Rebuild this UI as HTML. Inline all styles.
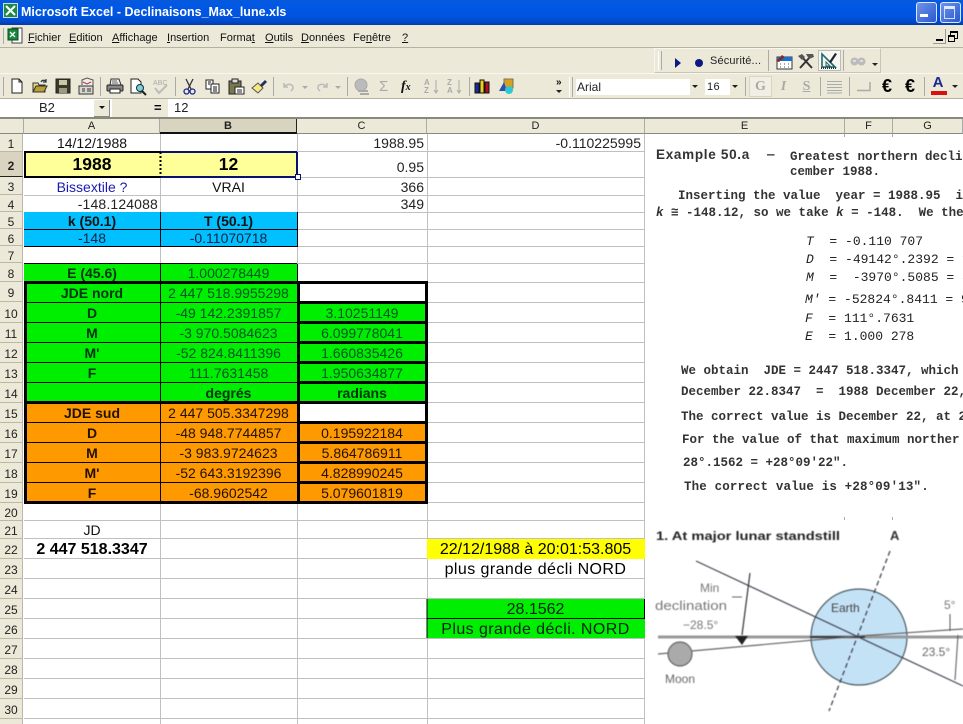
<!DOCTYPE html>
<html lang="fr"><head><meta charset="utf-8"><title>Microsoft Excel - Declinaisons_Max_lune.xls</title>
<style>
html,body{margin:0;padding:0;background:#fff}
#p{position:relative;width:963px;height:724px;overflow:hidden;background:#fff;font-family:"Liberation Sans",sans-serif;color:#000}
#p div,#p svg{position:absolute}
.m{top:31px;font-size:11px;line-height:14px;color:#111;white-space:nowrap}
.c{text-align:center;font-size:14px;white-space:nowrap;color:#111}
.R{text-align:right;font-size:14px;white-space:nowrap;color:#222}
.bd{font-weight:bold}
.a{left:24px;width:136px}.b{left:160px;width:137px}.k{left:297px;width:130px}.d{left:427px;width:217px}
.rh{left:0;width:23px;text-align:center;font-size:12px;color:#222;background:#ece9d8;border-right:1px solid #bbb8a8;border-bottom:1px solid #bbb8a8;box-sizing:border-box}
.ch{top:119px;height:15px;line-height:15px;font-size:11px;text-align:center;background:#ece9d8;border-right:1px solid #aaa;border-bottom:1px solid #888;box-sizing:border-box;color:#222}
.t{font-family:"Liberation Mono",monospace;font-size:12.5px;line-height:14px;color:#333;white-space:pre;font-weight:bold;letter-spacing:0;filter:blur(.35px)}
.n{font-weight:normal;color:#222}
.ls{letter-spacing:.42px}
</style></head><body><div id="p">

<!-- title bar -->
<div style="left:0;top:0;width:963px;height:25px;background:linear-gradient(#0a5ad6 0,#0058e6 4px,#0054e0 16px,#0048c8 22px,#023aa8 25px)"></div>
<svg style="left:3px;top:3px" width="15" height="15" viewBox="0 0 15 15"><rect x=".5" y=".5" width="14" height="14" fill="#1d8a46" stroke="#cde"/><path d="M3 3l9 9M12 3l-9 9" stroke="#fff" stroke-width="2"/></svg>
<div style="left:21px;top:4px;font-size:12.5px;line-height:16px;font-weight:bold;color:#fff;white-space:nowrap;letter-spacing:0">Microsoft Excel - Declinaisons_Max_lune.xls</div>
<div style="left:916px;top:2px;width:19px;height:19px;border:1px solid #dfe8fa;border-radius:3px;background:linear-gradient(135deg,#6f95e8,#2a58d0)"></div>
<div style="left:920px;top:14px;width:8px;height:3px;background:#fff"></div>
<div style="left:940px;top:2px;width:19px;height:19px;border:1px solid #dfe8fa;border-radius:3px;background:linear-gradient(135deg,#6f95e8,#2a58d0)"></div>
<div style="left:944px;top:6px;width:9px;height:9px;border:1px solid #cfe0ff;border-top:3px solid #dfeaff"></div>

<!-- menu bar -->
<div style="left:0;top:25px;width:963px;height:94px;background:#ece9d8"></div>
<div style="left:0;top:47px;width:963px;height:1px;background:#b5b2a2"></div>
<div style="left:3px;top:28px;width:1px;height:16px;background:#aaa"></div>
<svg style="left:7px;top:27px" width="17" height="18" viewBox="0 0 17 18"><path d="M5 1h10v15H5z" fill="#fff" stroke="#444"/><rect x="1" y="2" width="10" height="11" fill="#138a3a" stroke="#0a4a20"/><path d="M3 5l5 5M8 5l-5 5" stroke="#fff" stroke-width="1.3"/></svg>
<div class="m" style="left:28px"><u>F</u>ichier</div>
<div class="m" style="left:69px"><u>E</u>dition</div>
<div class="m" style="left:112px"><u>A</u>ffichage</div>
<div class="m" style="left:167px"><u>I</u>nsertion</div>
<div class="m" style="left:220px">Forma<u>t</u></div>
<div class="m" style="left:265px"><u>O</u>utils</div>
<div class="m" style="left:301px"><u>D</u>onnées</div>
<div class="m" style="left:353px">Fe<u>n</u>être</div>
<div class="m" style="left:402px"><u>?</u></div>
<div style="left:933px;top:29px;width:12px;height:14px;border-right:1px solid #999;border-bottom:1px solid #999"></div>
<div style="left:936px;top:39px;width:7px;height:2px;background:#000"></div>
<div style="left:950px;top:31px;width:6px;height:5px;border:1px solid #000;border-top-width:2px"></div>
<div style="left:948px;top:35px;width:5px;height:4px;border:1px solid #000;border-top-width:2px;background:#ece9d8"></div>

<!-- toolbar line 2 floating -->
<div style="left:654px;top:48px;width:227px;height:25px;border:1px solid #f8f7f0;border-right-color:#c8c5b5;border-bottom-color:#c8c5b5;box-sizing:border-box"></div>
<div style="left:658px;top:51px;width:2px;height:19px;border-left:1px solid #fff;border-right:1px solid #aaa"></div>
<svg style="left:674px;top:57px" width="8" height="12"><path d="M1 1l6 5-6 5z" fill="#0a1a80"/></svg>
<svg style="left:694px;top:58px" width="10" height="10"><circle cx="5" cy="5" r="4" fill="#0a1a80"/></svg>
<div style="left:710px;top:54px;font-size:11px;line-height:14px;letter-spacing:.15px;color:#222;white-space:nowrap">Sécurité...</div>
<div style="left:768px;top:50px;width:1px;height:21px;background:#aaa"></div>
<svg style="left:775px;top:52px" width="18" height="18" viewBox="0 0 18 18"><rect x="2" y="5" width="15" height="12" fill="#fff" stroke="#333"/><rect x="2" y="5" width="15" height="4" fill="#1c6fd0"/><path d="M1 9l6-6 3 2-6 5z" fill="#7a3030"/><path d="M5 12h1M9 12h1M13 12h1M5 15h1M9 15h1M13 15h1" stroke="#555"/></svg>
<svg style="left:797px;top:52px" width="18" height="18" viewBox="0 0 18 18"><path d="M3 16L13 5M15 16L5 5" stroke="#333" stroke-width="2"/><path d="M9 2h7l1 3-5 2zM1 4l4-2 3 3-3 3z" fill="#555"/></svg>
<div style="left:818px;top:50px;width:23px;height:21px;background:#f7f6f0;border:1px solid #bbb;box-sizing:border-box"></div>
<svg style="left:820px;top:51px" width="19" height="19" viewBox="0 0 19 19"><path d="M2 3v13h13z" fill="none" stroke="#1c6a70" stroke-width="1.6"/><path d="M6 11v4h4z" fill="none" stroke="#1c6a70"/><path d="M1 17h16" stroke="#333" stroke-width="2" stroke-dasharray="1 1"/><path d="M9 11l6-9 2 1-6 9z" fill="#223"/></svg>
<div style="left:843px;top:50px;width:1px;height:21px;background:#aaa"></div>
<svg style="left:850px;top:56px" width="16" height="11" viewBox="0 0 16 11"><circle cx="4.5" cy="5.5" r="4" fill="#bbb"/><circle cx="11.5" cy="5.5" r="4" fill="#bbb"/><path d="M3 5h3M10 5h3" stroke="#fff"/></svg>
<svg style="left:872px;top:63px" width="7" height="4"><path d="M0 0h6L3 3z" fill="#222"/></svg>

<!-- toolbar line 3 -->
<div style="left:0;top:73px;width:963px;height:1px;background:#f8f7f0"></div>
<div style="left:0;top:98px;width:963px;height:1px;background:#b5b2a2"></div>
<div style="left:3px;top:77px;width:1px;height:19px;background:#aaa"></div>
<svg style="left:10px;top:78px" width="14" height="17" viewBox="0 0 14 17"><path d="M2 1h7l3 3v11H2z" fill="#fff" stroke="#222"/><path d="M9 1v3h3" fill="none" stroke="#222"/></svg>
<svg style="left:31px;top:78px" width="18" height="17" viewBox="0 0 18 17"><path d="M2 5h5l1 2h6v7H2z" fill="#e8d880" stroke="#333"/><path d="M2 14l3-6h11l-3 6z" fill="#b8a030" stroke="#333"/><path d="M10 4c1-2 3-2 5-1M15 1v3h-3" fill="none" stroke="#234" stroke-width="1.2"/></svg>
<svg style="left:55px;top:78px" width="16" height="16" viewBox="0 0 16 16"><path d="M1 1h14v14H1z" fill="#3a3a28" stroke="#222"/><rect x="4" y="2" width="8" height="5" fill="#c8c8a8"/><rect x="4" y="10" width="8" height="5" fill="#9a9a80"/></svg>
<svg style="left:78px;top:77px" width="17" height="18" viewBox="0 0 17 18"><path d="M4 8V3l5-2 6 2v6" fill="#eee" stroke="#555"/><path d="M5 5l4 2 4-2" fill="none" stroke="#b33"/><rect x="1" y="9" width="14" height="8" fill="#d8d8d0" stroke="#333"/><path d="M4 12h3M9 12h4M4 14h3M9 14h4" stroke="#333"/></svg>
<div style="left:100px;top:77px;width:1px;height:19px;background:#aaa"></div>
<svg style="left:106px;top:78px" width="18" height="17" viewBox="0 0 18 17"><path d="M5 1h8l2 6H4z" fill="#eee" stroke="#333"/><rect x="1" y="7" width="16" height="6" rx="1" fill="#888" stroke="#222"/><rect x="4" y="11" width="10" height="4" fill="#fff" stroke="#222"/><path d="M6 3h5M6 5h6" stroke="#666"/></svg>
<svg style="left:130px;top:78px" width="17" height="18" viewBox="0 0 17 18"><path d="M1 1h7l3 3v11H1z" fill="#fff" stroke="#222"/><circle cx="10" cy="10" r="3.5" fill="#8cc" stroke="#035"/><path d="M12 13l4 4" stroke="#222" stroke-width="2"/></svg>
<svg style="left:153px;top:78px" width="16" height="17" viewBox="0 0 16 17"><text x="0" y="7" font-size="7" font-family="Liberation Sans" fill="#aaa">ABC</text><path d="M2 10l4 5 8-8" fill="none" stroke="#bbb" stroke-width="2"/></svg>
<div style="left:175px;top:77px;width:1px;height:19px;background:#aaa"></div>
<svg style="left:183px;top:78px" width="13" height="17" viewBox="0 0 13 17"><path d="M3 1l5 10M10 1l-5 10" stroke="#333" stroke-width="1.3"/><circle cx="3.5" cy="13.5" r="2.5" fill="none" stroke="#1a2a90" stroke-width="1.3"/><circle cx="9.5" cy="13.5" r="2.5" fill="none" stroke="#1a2a90" stroke-width="1.3"/></svg>
<svg style="left:205px;top:79px" width="16" height="15" viewBox="0 0 16 15"><path d="M1 1h7v9H1z" fill="#fff" stroke="#222"/><path d="M6 5h8v9H6z" fill="#fff" stroke="#222"/><path d="M3 3h3M3 5h2M8 8h4M8 10h4M8 12h4" stroke="#111"/></svg>
<svg style="left:228px;top:78px" width="17" height="17" viewBox="0 0 17 17"><rect x="1" y="3" width="12" height="13" fill="#7a7850" stroke="#222"/><rect x="4" y="1" width="6" height="4" fill="#ddd" stroke="#222"/><rect x="7" y="9" width="9" height="7" fill="#fff" stroke="#222"/><path d="M9 12h5M9 14h5" stroke="#222"/></svg>
<svg style="left:251px;top:78px" width="17" height="17" viewBox="0 0 17 17"><path d="M1 10l6-5 5 5-5 5z" fill="#f5e87c" stroke="#555"/><path d="M9 7l5-5 2 2-5 5z" fill="#203060"/></svg>
<div style="left:273px;top:77px;width:1px;height:19px;background:#aaa"></div>
<svg style="left:281px;top:81px" width="15" height="11" viewBox="0 0 15 11"><path d="M3 2v4h4M3 6c2-3 8-4 9 0 .5 2-1 3-2 4" fill="none" stroke="#bbb" stroke-width="1.5"/></svg>
<svg style="left:302px;top:86px" width="7" height="4"><path d="M0 0h6L3 3z" fill="#aaa"/></svg>
<svg style="left:315px;top:81px" width="15" height="11" viewBox="0 0 15 11"><path d="M12 2v4H8M12 6c-2-3-8-4-9 0-.5 2 1 3 2 4" fill="none" stroke="#bbb" stroke-width="1.5"/></svg>
<svg style="left:335px;top:86px" width="7" height="4"><path d="M0 0h6L3 3z" fill="#aaa"/></svg>
<div style="left:347px;top:77px;width:1px;height:19px;background:#aaa"></div>
<svg style="left:354px;top:78px" width="16" height="17" viewBox="0 0 16 17"><circle cx="7" cy="7" r="6" fill="#bbb" stroke="#aaa"/><path d="M4 13h10M6 16h9" stroke="#aaa" stroke-width="2"/></svg>
<div style="left:379px;top:79px;font-size:15px;line-height:16px;color:#aaa">Σ</div>
<div style="left:401px;top:79px;font-size:14px;line-height:16px;color:#111;font-family:'Liberation Serif',serif;font-style:italic;font-weight:bold">f<span style="font-size:10px">x</span></div>
<svg style="left:423px;top:78px" width="17" height="17" viewBox="0 0 17 17" font-family="Liberation Sans" font-weight="bold" font-size="8" fill="#aaa"><text x="1" y="7">A</text><text x="1" y="15">Z</text><path d="M13 2v12M11 12l2 3 2-3" stroke="#aaa" fill="none"/></svg>
<svg style="left:446px;top:78px" width="17" height="17" viewBox="0 0 17 17" font-family="Liberation Sans" font-weight="bold" font-size="8" fill="#aaa"><text x="1" y="7">Z</text><text x="1" y="15">A</text><path d="M13 2v12M11 12l2 3 2-3" stroke="#aaa" fill="none"/></svg>
<div style="left:469px;top:77px;width:1px;height:19px;background:#aaa"></div>
<svg style="left:474px;top:78px" width="17" height="16" viewBox="0 0 17 16"><rect x="1" y="5" width="4" height="10" fill="#1a2aa0" stroke="#111"/><rect x="6" y="2" width="4" height="13" fill="#e8d020" stroke="#111"/><rect x="11" y="4" width="4" height="11" fill="#b01020" stroke="#111"/></svg>
<svg style="left:498px;top:78px" width="18" height="17" viewBox="0 0 18 17"><path d="M6 1h9v9H6z" fill="#d8a020" stroke="#775"/><path d="M1 13l5-9 3 9z" fill="#2a50b0"/><circle cx="11" cy="12" r="4" fill="#30c8d0"/></svg>
<div style="left:556px;top:78px;font-size:10px;line-height:10px;font-weight:bold;color:#111">»</div>
<svg style="left:556px;top:90px" width="7" height="4"><path d="M0 0h6L3 3z" fill="#222"/></svg>
<div style="left:569px;top:77px;width:2px;height:20px;border-left:1px solid #fff;border-right:1px solid #aaa"></div>
<div style="left:576px;top:79px;width:124px;height:16px;background:#fff"></div>
<div style="left:577px;top:79px;font-size:12px;line-height:16px;color:#222">Arial</div>
<div style="left:690px;top:79px;width:10px;height:16px;background:#ece9d8"></div>
<svg style="left:692px;top:85px" width="7" height="4"><path d="M0 0h6L3 3z" fill="#222"/></svg>
<div style="left:705px;top:79px;width:36px;height:16px;background:#fff"></div>
<div style="left:707px;top:79px;font-size:11px;line-height:16px;color:#222;letter-spacing:.4px">16</div>
<div style="left:730px;top:79px;width:11px;height:16px;background:#ece9d8"></div>
<svg style="left:732px;top:85px" width="7" height="4"><path d="M0 0h6L3 3z" fill="#222"/></svg>
<div style="left:745px;top:77px;width:1px;height:19px;background:#aaa"></div>
<div style="left:749px;top:76px;width:23px;height:21px;background:#f1efe4;border:1px solid #d8d5c5;box-sizing:border-box"></div>
<div style="left:749px;top:76px;width:23px;text-align:center;font-family:'Liberation Serif',serif;font-size:14px;line-height:21px;font-weight:bold;color:#aaa">G</div>
<div style="left:776px;top:76px;width:15px;text-align:center;font-family:'Liberation Serif',serif;font-size:14px;line-height:21px;font-weight:bold;font-style:italic;color:#aaa">I</div>
<div style="left:799px;top:76px;width:15px;text-align:center;font-family:'Liberation Serif',serif;font-size:14px;line-height:21px;font-weight:bold;text-decoration:underline;color:#aaa">S</div>
<div style="left:820px;top:77px;width:1px;height:19px;background:#aaa"></div>
<svg style="left:827px;top:80px" width="16" height="14"><path d="M0 1.5h15M0 4.5h15M0 7.5h15M0 10.5h15M0 13h15" stroke="#aaa"/></svg>
<div style="left:849px;top:77px;width:1px;height:19px;background:#aaa"></div>
<svg style="left:857px;top:82px" width="14" height="10"><path d="M0 8.5h13V0" fill="none" stroke="#aaa" stroke-width="1.5"/></svg>
<div style="left:878px;top:76px;width:18px;text-align:center;font-size:18px;line-height:21px;font-weight:bold;color:#000">€</div>
<div style="left:901px;top:76px;width:18px;text-align:center;font-size:18px;line-height:21px;font-weight:bold;color:#000">€</div>
<div style="left:924px;top:77px;width:1px;height:19px;background:#aaa"></div>
<div style="left:930px;top:74px;width:16px;text-align:center;font-size:15px;line-height:18px;font-weight:bold;color:#1a2a8a">A</div>
<div style="left:931px;top:91px;width:16px;height:4px;background:#d81010"></div>
<svg style="left:952px;top:85px" width="7" height="4"><path d="M0 0h6L3 3z" fill="#222"/></svg>

<!-- formula bar -->
<div style="left:0;top:99px;width:963px;height:19px;background:#fff"></div>
<div style="left:0;top:117px;width:963px;height:2px;background:#8a8878"></div>
<div style="left:39px;top:100px;font-size:13px;line-height:16px;color:#222">B2</div>
<div style="left:94px;top:100px;width:16px;height:17px;background:#ece9d8;border-right:1px solid #888;border-bottom:1px solid #888;box-sizing:border-box"></div>
<svg style="left:99px;top:106px" width="7" height="4"><path d="M0 0h6L3 3z" fill="#111"/></svg>
<div style="left:112px;top:99px;width:56px;height:18px;background:#ece9d8"></div>
<div style="left:154px;top:100px;font-size:13px;line-height:16px;font-weight:bold">=</div>
<div style="left:174px;top:100px;font-size:13px;line-height:16px;color:#222">12</div>

<!-- column headers -->
<div class="ch" style="left:0;width:24px"></div>
<div class="ch" style="left:24px;width:136px">A</div>
<div class="ch" style="left:160px;width:137px;font-weight:bold;background:#d8d4c0;border-right:1px solid #222;border-bottom:2px solid #111">B</div>
<div class="ch" style="left:297px;width:130px">C</div>
<div class="ch" style="left:427px;width:218px">D</div>
<div class="ch" style="left:645px;width:200px">E</div>
<div class="ch" style="left:845px;width:48px">F</div>
<div class="ch" style="left:893px;width:70px">G</div>

<!-- row headers -->
<div class="rh" style="top:134px;height:18px;line-height:21px">1</div>
<div class="rh" style="top:152px;height:25px;line-height:29px;font-weight:bold;background:#d8d4c0;border-bottom:1px solid #222">2</div>
<div class="rh" style="top:177px;height:18px;line-height:21px">3</div>
<div class="rh" style="top:195px;height:17px;line-height:20px">4</div>
<div class="rh" style="top:212px;height:17px;line-height:20px">5</div>
<div class="rh" style="top:229px;height:17px;line-height:20px">6</div>
<div class="rh" style="top:246px;height:17px;line-height:20px">7</div>
<div class="rh" style="top:263px;height:19px;line-height:22px">8</div>
<div class="rh" style="top:282px;height:20px;line-height:23px">9</div>
<div class="rh" style="top:302px;height:21px;line-height:24px">10</div>
<div class="rh" style="top:323px;height:20px;line-height:22px">11</div>
<div class="rh" style="top:343px;height:20px;line-height:23px">12</div>
<div class="rh" style="top:363px;height:20px;line-height:23px">13</div>
<div class="rh" style="top:383px;height:20px;line-height:23px">14</div>
<div class="rh" style="top:403px;height:20px;line-height:23px">15</div>
<div class="rh" style="top:423px;height:20px;line-height:22px">16</div>
<div class="rh" style="top:443px;height:20px;line-height:22px">17</div>
<div class="rh" style="top:463px;height:20px;line-height:22px">18</div>
<div class="rh" style="top:483px;height:20px;line-height:22px">19</div>
<div class="rh" style="top:503px;height:18px;line-height:20px">20</div>
<div class="rh" style="top:521px;height:18px;line-height:20px">21</div>
<div class="rh" style="top:539px;height:20px;line-height:22px">22</div>
<div class="rh" style="top:559px;height:20px;line-height:22px">23</div>
<div class="rh" style="top:579px;height:20px;line-height:22px">24</div>
<div class="rh" style="top:599px;height:20px;line-height:22px">25</div>
<div class="rh" style="top:619px;height:20px;line-height:22px">26</div>
<div class="rh" style="top:639px;height:20px;line-height:22px">27</div>
<div class="rh" style="top:659px;height:20px;line-height:22px">28</div>
<div class="rh" style="top:679px;height:20px;line-height:22px">29</div>
<div class="rh" style="top:699px;height:20px;line-height:22px">30</div>
<div class="rh" style="top:719px;height:5px;border-bottom:0"></div>

<!-- grid -->
<svg style="left:0;top:0" width="963" height="724"><path fill="none" stroke="#c0c0c0" d="M160.5 134V724M297.5 134V724M427.5 134V724M644.5 134V724M24 151.5H645M24 177.5H645M24 195.5H645M24 212.5H645M24 229.5H645M24 246.5H645M24 263.5H645M24 282.5H645M24 302.5H645M24 322.5H645M24 342.5H645M24 362.5H645M24 382.5H645M24 402.5H645M24 422.5H645M24 442.5H645M24 462.5H645M24 482.5H645M24 502.5H645M24 520.5H645M24 538.5H645M24 558.5H645M24 578.5H645M24 598.5H645M24 618.5H645M24 638.5H645M24 658.5H645M24 678.5H645M24 698.5H645M24 718.5H645"/></svg>

<!-- fills -->
<div style="left:24px;top:152px;width:273px;height:25px;background:#ffff99"></div>
<div style="left:24px;top:212px;width:273px;height:35px;background:#00c0ff"></div>
<div style="left:24px;top:264px;width:273px;height:19px;background:#00ee00"></div>
<div style="left:24px;top:283px;width:403px;height:120px;background:#00ee00"></div>
<div style="left:24px;top:403px;width:403px;height:100px;background:#ff9900"></div>
<div style="left:298px;top:284px;width:128px;height:18px;background:#fff"></div>
<div style="left:298px;top:404px;width:128px;height:18px;background:#fff"></div>
<div style="left:427px;top:539px;width:218px;height:20px;background:#ffff00"></div>
<div style="left:427px;top:599px;width:218px;height:39px;background:#00ee00"></div>

<!-- borders -->
<svg style="left:0;top:0" width="963" height="724" shape-rendering="crispEdges">
<path stroke="#000" fill="none" stroke-width="1" d="M24 246.5H297M24 263.5H297M160.5 212V247M160.5 264V283M24 229.5H297M297.5 212V247M297.5 264V283M160.5 283V503M25 302.5H297M25 322.5H297M25 342.5H297M25 362.5H297M25 382.5H297M25 422.5H297M25 442.5H297M25 462.5H297M25 482.5H297M427 599V638M427 618.5H645M644.5 599V619"/>
<path stroke="#000" fill="none" stroke-width="3" d="M25.5 282V504M24 282.5H428M24 502.5H428M298.5 282V504M426.5 282V504M24 402.5H428M298 302.5H428M298 322.5H428M298 342.5H428M298 362.5H428M298 382.5H428M298 422.5H428M298 442.5H428M298 462.5H428M298 482.5H428"/>
<path stroke="#000" fill="none" stroke-width="2" d="M24 152H160M24 177H160M25 152V177"/>
<path stroke="#0a1070" fill="none" stroke-width="2" d="M160 152H297M160 177H297M297 152V175"/>
<path stroke="#000" stroke-width="2" stroke-dasharray="2 2" fill="none" d="M160.5 152V177"/>
</svg>
<div style="left:295px;top:174px;width:4px;height:4px;background:#fff;border:1px solid #0a1070"></div>

<!-- cells -->
<div class="c a" style="top:134px;line-height:18px">14/12/1988</div>
<div class="R k" style="top:134px;line-height:18px;width:127px">1988.95</div>
<div class="R d" style="top:134px;line-height:18px;width:214px">-0.110225995</div>
<div class="c a bd" style="top:152px;line-height:25px;font-size:17.5px;color:#000">1988</div>
<div class="c b bd" style="top:152px;line-height:25px;font-size:17.5px;color:#000">12</div>
<div class="R k" style="top:155px;line-height:24px;width:127px">0.95</div>
<div class="c a" style="top:178px;line-height:18px;color:#1a1ab0">Bissextile ?</div>
<div class="c b" style="top:178px;line-height:18px">VRAI</div>
<div class="R k" style="top:178px;line-height:18px;width:127px">366</div>
<div class="R a" style="top:195px;line-height:18px;width:134px;letter-spacing:.15px">-148.124088</div>
<div class="R k" style="top:195px;line-height:18px;width:127px">349</div>
<div class="c a bd" style="top:212px;line-height:18px">k (50.1)</div>
<div class="c b bd" style="top:212px;line-height:18px">T (50.1)</div>
<div class="c a" style="top:229px;line-height:18px;color:#124">-148</div>
<div class="c b" style="top:229px;line-height:18px;color:#124">-0.11070718</div>
<div class="c a bd" style="top:264px;line-height:18px;color:#031">E (45.6)</div>
<div class="c b" style="top:264px;line-height:18px;color:#052">1.000278449</div>
<div class="c a bd" style="top:283px;line-height:20px;color:#031">JDE nord</div>
<div class="c b" style="top:283px;line-height:20px;color:#052">2 447 518.9955298</div>
<div class="c a bd" style="top:303px;line-height:20px;color:#031">D</div>
<div class="c b" style="top:303px;line-height:20px;color:#052">-49 142.2391857</div>
<div class="c k" style="top:303px;line-height:20px;color:#052">3.10251149</div>
<div class="c a bd" style="top:323px;line-height:20px;color:#031">M</div>
<div class="c b" style="top:323px;line-height:20px;color:#052">-3 970.5084623</div>
<div class="c k" style="top:323px;line-height:20px;color:#052">6.099778041</div>
<div class="c a bd" style="top:343px;line-height:20px;color:#031">M'</div>
<div class="c b" style="top:343px;line-height:20px;color:#052">-52 824.8411396</div>
<div class="c k" style="top:343px;line-height:20px;color:#052">1.660835426</div>
<div class="c a bd" style="top:363px;line-height:20px;color:#031">F</div>
<div class="c b" style="top:363px;line-height:20px;color:#052">111.7631458</div>
<div class="c k" style="top:363px;line-height:20px;color:#052">1.950634877</div>
<div class="c b bd" style="top:383px;line-height:20px;color:#031">degrés</div>
<div class="c k bd" style="top:383px;line-height:20px;color:#031">radians</div>
<div class="c a bd" style="top:403px;line-height:20px;color:#210">JDE sud</div>
<div class="c b" style="top:403px;line-height:20px;color:#210">2 447 505.3347298</div>
<div class="c a bd" style="top:423px;line-height:20px;color:#210">D</div>
<div class="c b" style="top:423px;line-height:20px;color:#210">-48 948.7744857</div>
<div class="c k" style="top:423px;line-height:20px;color:#210">0.195922184</div>
<div class="c a bd" style="top:443px;line-height:20px;color:#210">M</div>
<div class="c b" style="top:443px;line-height:20px;color:#210">-3 983.9724623</div>
<div class="c k" style="top:443px;line-height:20px;color:#210">5.864786911</div>
<div class="c a bd" style="top:463px;line-height:20px;color:#210">M'</div>
<div class="c b" style="top:463px;line-height:20px;color:#210">-52 643.3192396</div>
<div class="c k" style="top:463px;line-height:20px;color:#210">4.828990245</div>
<div class="c a bd" style="top:483px;line-height:20px;color:#210">F</div>
<div class="c b" style="top:483px;line-height:20px;color:#210">-68.9602542</div>
<div class="c k" style="top:483px;line-height:20px;color:#210">5.079601819</div>
<div class="c a" style="top:521px;line-height:18px">JD</div>
<div class="c a bd" style="top:540px;line-height:20px;font-size:16px;color:#000">2 447 518.3347</div>
<div class="c d" style="top:540px;line-height:20px;font-size:16px;color:#000">22/12/1988 à 20:01:53.805</div>
<div class="c d ls" style="top:560px;line-height:20px;font-size:16px;color:#000">plus grande décli NORD</div>
<div class="c d" style="top:600px;line-height:20px;font-size:16px;color:#021">28.1562</div>
<div class="c d ls" style="top:620px;line-height:20px;font-size:16px;color:#021">Plus grande décli. NORD</div>

<!-- scanned image 1 -->
<div style="left:645px;top:134px;width:318px;height:386px;background:#fff"></div>
<div style="left:844px;top:134px;width:1px;height:3px;background:#aaa"></div>
<div style="left:892px;top:134px;width:1px;height:3px;background:#aaa"></div>
<div class="t" style="left:656px;top:148px;font-family:'Liberation Sans',sans-serif;font-size:13.5px;letter-spacing:.7px">Example 50.a</div>
<div class="t" style="left:767px;top:148px">—</div>
<div class="t" style="left:790px;top:150px">Greatest northern decli</div>
<div class="t" style="left:790px;top:165px">cember 1988.</div>
<div class="t" style="left:678px;top:189px">Inserting the value  year = 1988.95  in</div>
<div class="t" style="left:656px;top:206px"><i>k</i> ≅ -148.12, so we take <i>k</i> = -148.  We the</div>
<div class="t n" style="left:806px;top:235px;font-size:13px"><i>T</i>  = -0.110 707</div>
<div class="t n" style="left:806px;top:253px;font-size:13px"><i>D</i>  = -49142°.2392 = 17</div>
<div class="t n" style="left:806px;top:271px;font-size:13px"><i>M</i>  =  -3970°.5085 = 34</div>
<div class="t n" style="left:805px;top:293px;font-size:13px"><i>M'</i> = -52824°.8411 = 95</div>
<div class="t n" style="left:805px;top:312px;font-size:13px"><i>F</i>  = 111°.7631</div>
<div class="t n" style="left:805px;top:330px;font-size:13px"><i>E</i>  = 1.000 278</div>
<div class="t" style="left:681px;top:364px">We obtain  JDE = 2447 518.3347, which</div>
<div class="t" style="left:681px;top:385px">December 22.8347  =  1988 December 22,</div>
<div class="t" style="left:681px;top:410px">The correct value is December 22, at 2</div>
<div class="t" style="left:682px;top:433px">For the value of that maximum norther</div>
<div class="t" style="left:683px;top:456px">28°.1562 = +28°09'22".</div>
<div class="t" style="left:684px;top:480px;letter-spacing:.15px">The correct value is +28°09'13".</div>

<!-- diagram image 2 -->
<div style="left:645px;top:520px;width:318px;height:204px;background:#fff"></div>
<div style="left:844px;top:517px;width:1px;height:3px;background:#aaa"></div>
<div style="left:892px;top:517px;width:1px;height:3px;background:#aaa"></div>
<svg style="left:640px;top:515px;filter:blur(.4px)" width="323" height="209" viewBox="0 0 323 209">
<circle cx="219" cy="122" r="48" fill="#c4e2f6" stroke="#4a5a62" stroke-width="1.2"/>
<path d="M18 122H323" stroke="#999" stroke-width="3"/>
<path d="M170 122H225" stroke="#223" stroke-width="1.5"/>
<path d="M18 139L219 121l104-7" stroke="#666" stroke-width="1.2" fill="none"/>
<path d="M56 46L323 171" stroke="#445" stroke-width="1.2"/>
<path d="M250 36L189 196" stroke="#445" stroke-width="1.3" stroke-dasharray="5 3"/>
<path d="M110 58L102 120" stroke="#333" stroke-width="1.2"/>
<path d="M95 121h13l-6 9z" fill="#222"/>
<circle cx="40" cy="139" r="12" fill="#aaa" stroke="#666" stroke-width="1.2"/>
<path d="M310 99v17M318 120l-3 45" stroke="#555" stroke-width="1"/>
<path d="M92 82h10" stroke="#666"/>
<g font-family="Liberation Sans,sans-serif" fill="#555" font-size="13">
<text x="16" y="25" font-weight="bold" font-size="12" fill="#222" textLength="184" lengthAdjust="spacingAndGlyphs">1. At major lunar standstill</text>
<text x="250" y="25" font-weight="bold" fill="#333">A</text>
<text x="60" y="77" font-size="12" fill="#777">Min</text>
<text x="15" y="95" font-size="13" fill="#777" textLength="72" lengthAdjust="spacingAndGlyphs">declination</text>
<text x="43" y="114" font-size="12" fill="#777">−28.5°</text>
<text x="191" y="97" font-size="12" fill="#444">Earth</text>
<text x="25" y="168" font-size="12" fill="#666">Moon</text>
<text x="304" y="94" font-size="12" fill="#777">5°</text>
<text x="282" y="141" font-size="12" fill="#666">23.5°</text>
</g>
</svg>
</div></body></html>
